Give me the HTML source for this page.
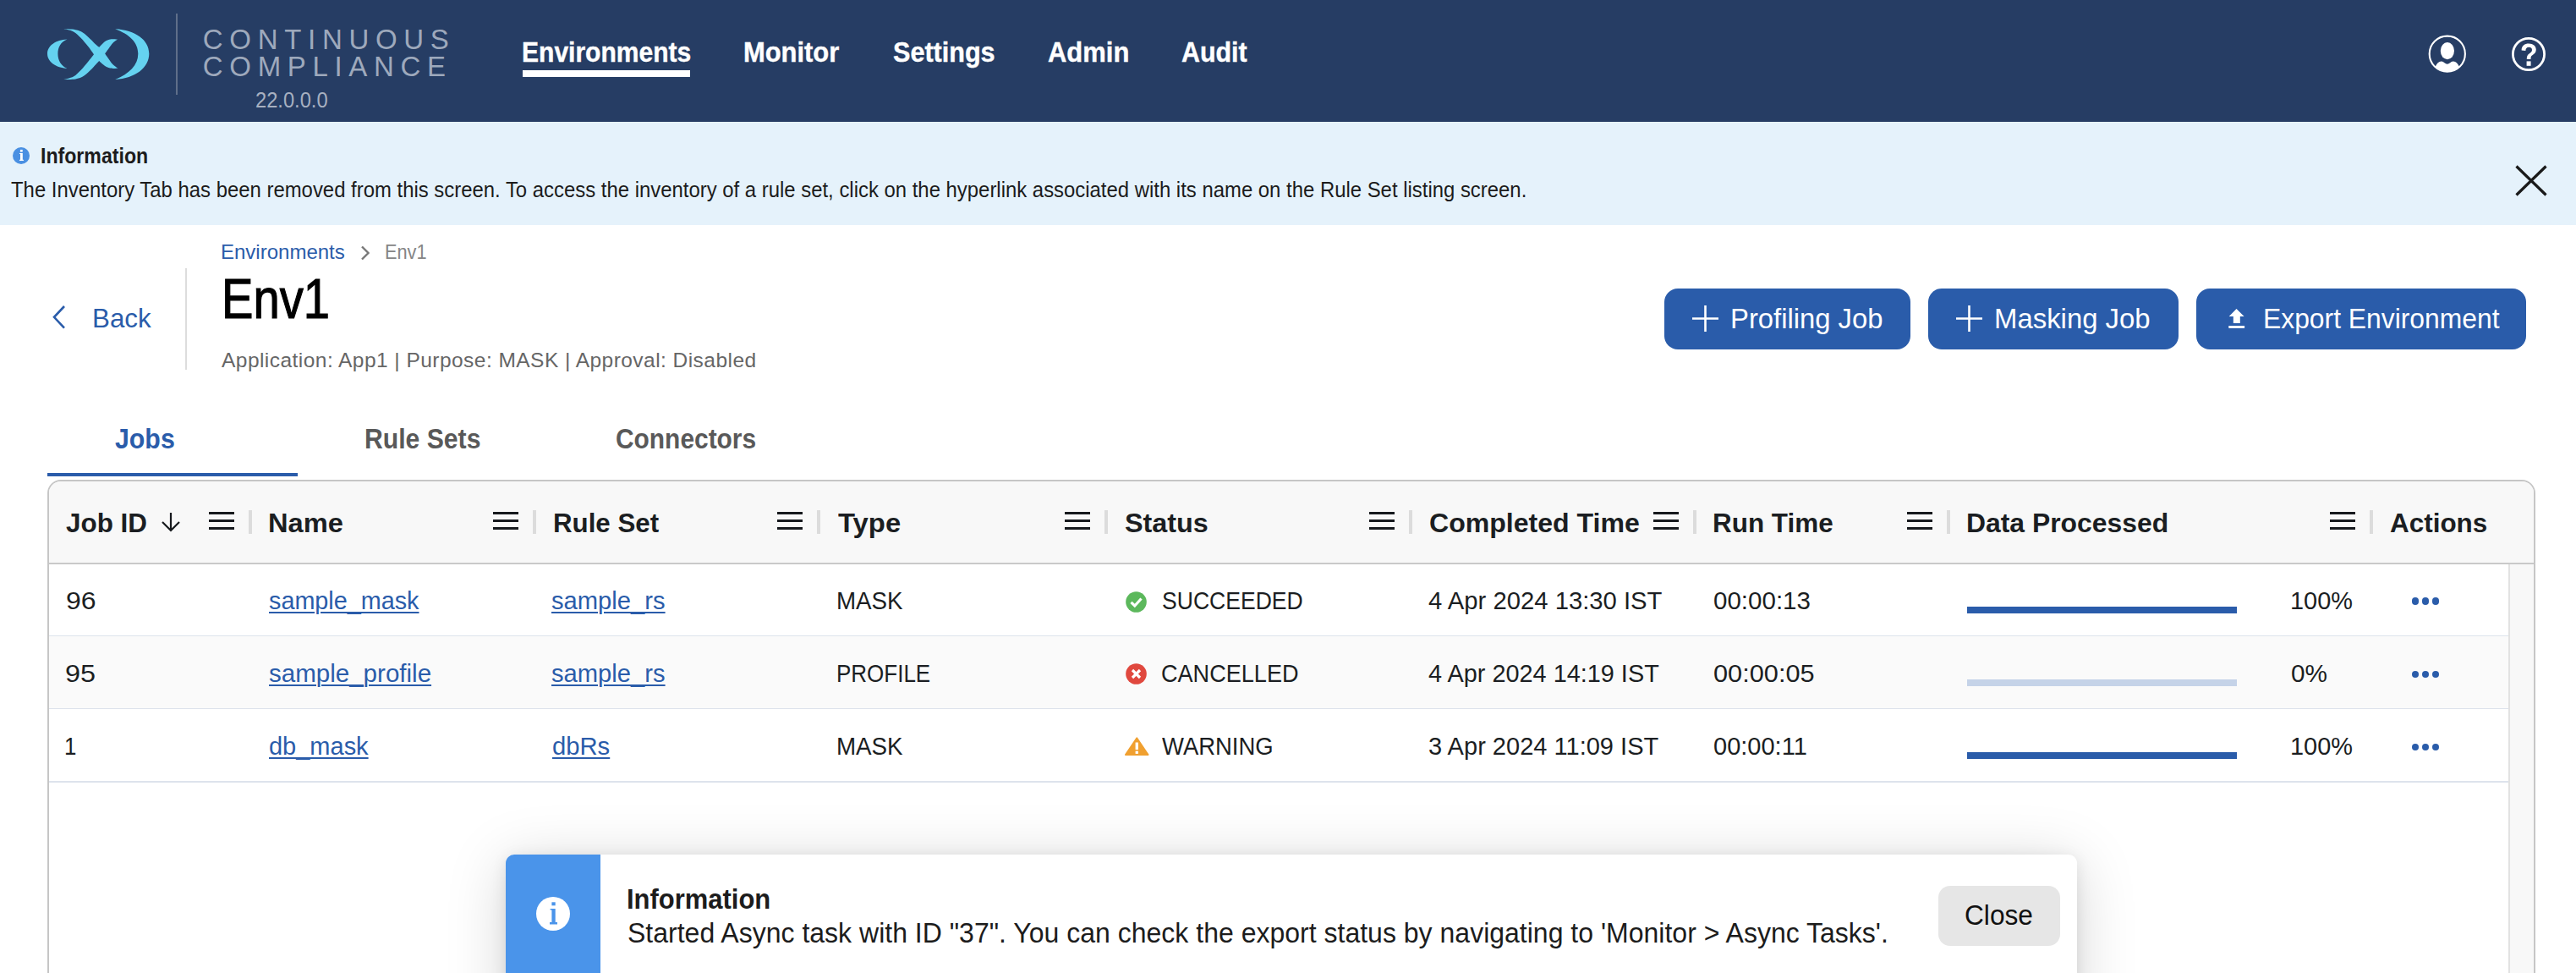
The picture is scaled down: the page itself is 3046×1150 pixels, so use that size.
<!DOCTYPE html>
<html><head><meta charset="utf-8"><style>
html,body{margin:0;padding:0;width:3046px;height:1150px;overflow:hidden;background:#fff;position:relative}
.t{position:absolute;white-space:nowrap;line-height:1;font-family:"Liberation Sans",sans-serif;transform-origin:0 0}
.r{position:absolute}
u{text-decoration-thickness:2px;text-underline-offset:2.5px}
</style></head><body>
<div class="r" style="left:0;top:0;width:3046px;height:144px;background:#263d64"></div>
<svg class="r" style="left:56px;top:33px" width="121" height="62" viewBox="0 0 121 62">
<g fill="#65d2f0">
<path d="M23.5 13.5 C10 14 0 21 0 30.5 C0 40 10 47 23.5 48 C16 45 12.4 38 12.4 30.5 C12.4 23 16 16 23.5 13.5 Z"/>
<path d="M19 1.1 C19.00 1.10 29.48 1.48 33.3 2.2 C37.12 2.92 39.02 3.62 41.9 5.4 C44.78 7.18 48.00 10.50 50.6 12.9 C53.20 15.30 55.72 18.13 57.5 19.8 C59.28 21.47 61.30 22.90 61.3 22.9 C61.30 22.90 65.53 18.12 67.5 16.6 C69.47 15.08 71.35 14.37 73.1 13.8 C74.85 13.23 76.35 13.25 78 13.2 C79.65 13.15 83.00 13.50 83 13.5 C83.00 13.50 78.95 16.32 77.3 18 C75.65 19.68 74.62 21.52 73.1 23.6 C71.58 25.68 68.20 30.50 68.2 30.5 C68.20 30.50 71.58 35.32 73.1 37.4 C74.62 39.48 75.58 41.28 77.3 43 C79.02 44.72 83.40 47.70 83.4 47.7 C83.40 47.70 79.72 47.97 78 47.9 C76.28 47.83 74.85 47.87 73.1 47.3 C71.35 46.73 69.47 45.88 67.5 44.5 C65.53 43.12 61.30 39.00 61.3 39 C61.30 39.00 59.28 41.12 57.5 43 C55.72 44.88 53.20 47.87 50.6 50.3 C48.00 52.73 44.78 55.92 41.9 57.6 C39.02 59.28 37.12 59.83 33.3 60.4 C29.48 60.97 19.00 61.00 19 61 C19.00 61.00 27.48 59.23 30.9 57.4 C34.32 55.57 36.63 52.90 39.5 50 C42.37 47.10 45.52 43.13 48.1 40 C50.68 36.87 55.00 31.20 55 31.2 C55.00 31.20 50.68 25.03 48.1 21.8 C45.52 18.57 42.37 14.70 39.5 11.8 C36.63 8.90 34.32 6.18 30.9 4.4 C27.48 2.62 19.00 1.10 19 1.1 Z"/>
<path d="M80.2 1.2 C104 2.5 120.3 14 120.3 30.5 C120.3 47 104 59.5 80.2 61 C97 54 107.3 44 107.3 30.5 C107.3 17 97 7.5 80.2 1.2 Z"/>
</g></svg>
<div class="r" style="left:208px;top:16px;width:2px;height:96px;background:#5f6f8a"></div>
<div id="cc1" class="t" style="left:239.80px;top:30.17px;font-size:33px;color:#9ea9bc;font-weight:400;letter-spacing:7.693px;">CONTINUOUS</div>
<div id="cc2" class="t" style="left:239.80px;top:62.27px;font-size:33px;color:#9ea9bc;font-weight:400;letter-spacing:7.667px;">COMPLIANCE</div>
<div id="ver" class="t" style="left:301.79px;top:104.99px;font-size:26px;color:#a7b0c0;font-weight:400;transform:scaleX(0.9112);">22.0.0.0</div>
<div id="nav1" class="t" style="left:616.97px;top:44.87px;font-size:33px;color:#ffffff;font-weight:700;transform:scaleX(0.9101);-webkit-text-stroke:0.4px #fff;">Environments</div>
<div id="nav2" class="t" style="left:878.94px;top:44.87px;font-size:33px;color:#ffffff;font-weight:700;transform:scaleX(0.9362);-webkit-text-stroke:0.4px #fff;">Monitor</div>
<div id="nav3" class="t" style="left:1056.11px;top:44.87px;font-size:33px;color:#ffffff;font-weight:700;transform:scaleX(0.9264);-webkit-text-stroke:0.4px #fff;">Settings</div>
<div id="nav4" class="t" style="left:1239.08px;top:44.87px;font-size:33px;color:#ffffff;font-weight:700;transform:scaleX(0.9380);-webkit-text-stroke:0.4px #fff;">Admin</div>
<div id="nav5" class="t" style="left:1396.66px;top:44.87px;font-size:33px;color:#ffffff;font-weight:700;transform:scaleX(0.9205);-webkit-text-stroke:0.4px #fff;">Audit</div>
<div class="r" style="left:618px;top:83px;width:198px;height:8px;background:#fff"></div>
<svg class="r" style="left:2870px;top:40px" width="48" height="48" viewBox="0 0 48 48">
<circle cx="23.8" cy="23.7" r="21.1" fill="none" stroke="#fff" stroke-width="2.1"/>
<ellipse cx="23.9" cy="20.1" rx="8.1" ry="10.1" fill="#fff"/>
<path d="M9.6 38.8 C11.5 35 13.5 32.6 16.8 32.4 C19.5 32.3 21.5 35.6 23.8 35.8 C26.1 35.6 28.1 32.3 30.8 32.4 C34.1 32.6 36.1 35 38 38.8 C34.2 42.6 29.3 44.8 23.8 44.8 C18.3 44.8 13.4 42.6 9.6 38.8 Z" fill="#fff"/>
</svg>
<svg class="r" style="left:2968px;top:42px" width="44" height="44" viewBox="0 0 44 44">
<circle cx="22" cy="22" r="18.6" fill="none" stroke="#fff" stroke-width="2.8"/>
<path d="M13.6 17.4 C13.6 12.2 17.3 9.6 22.2 9.6 C27.3 9.6 30.8 12.6 30.8 16.8 C30.8 20.2 28.6 21.8 26.4 23.3 C24.8 24.4 24.5 25.3 24.5 28.1 L19.8 28.1 C19.8 24.6 20.4 23 22.9 21.2 C25 19.7 26 18.8 26 17 C26 15 24.5 13.8 22.3 13.8 C19.7 13.8 18.4 15.5 18.4 17.9 Z" fill="#fff"/>
<rect x="19.6" y="30.4" width="5" height="5.4" fill="#fff"/>
</svg>
<div class="r" style="left:0;top:144px;width:3046px;height:121.5px;background:#e5f2fb"></div>
<svg class="r" style="left:15px;top:174px" width="20" height="20" viewBox="0 0 20 20">
<circle cx="10" cy="10" r="10" fill="#4a90e2"/>
<rect x="8.9" y="2.9" width="2.8" height="2.7" fill="#fff"/>
<path d="M8 7.1 L11.8 7.1 L11.8 14.8 L12.9 14.8 L12.9 16 L8 16 L8 14.8 L9 14.8 L9 8 L8 8 Z" fill="#fff"/>
</svg>
<div id="b_title" class="t" style="left:47.91px;top:171.19px;font-size:26px;color:#1c1c1c;font-weight:700;transform:scaleX(0.8893);">Information</div>
<div id="b_body" class="t" style="left:13.40px;top:211.29px;font-size:26px;color:#1c1c1c;font-weight:400;transform:scaleX(0.9191);">The Inventory Tab has been removed from this screen. To access the inventory of a rule set, click on the hyperlink associated with its name on the Rule Set listing screen.</div>
<svg class="r" style="left:2974px;top:195px" width="38" height="37" viewBox="0 0 38 37">
<path d="M1.5 1.5 L36.5 35.5 M36.5 1.5 L1.5 35.5" stroke="#1a1a1a" stroke-width="3.2"/>
</svg>
<svg class="r" style="left:60px;top:360px" width="20" height="30" viewBox="0 0 20 30">
<path d="M16 2 L4 14.8 L16 27.6" fill="none" stroke="#2a5caa" stroke-width="2.6"/>
</svg>
<div id="back" class="t" style="left:108.74px;top:360.21px;font-size:32px;color:#2a5caa;font-weight:400;transform:scaleX(0.9783);">Back</div>
<div class="r" style="left:219px;top:317px;width:2px;height:120px;background:#dddddd"></div>
<div id="bc1" class="t" style="left:260.99px;top:285.88px;font-size:24px;color:#2a5caa;font-weight:400;transform:scaleX(1.0002);">Environments</div>
<svg class="r" style="left:425px;top:289px" width="14" height="20" viewBox="0 0 14 20">
<path d="M3 2.5 L10.5 10 L3 17.5" fill="none" stroke="#777" stroke-width="2.4"/>
</svg>
<div id="bc2" class="t" style="left:454.67px;top:285.88px;font-size:24px;color:#858585;font-weight:400;transform:scaleX(0.9054);">Env1</div>
<div id="title" class="t" style="left:262.32px;top:318.58px;font-size:67px;color:#000000;font-weight:400;transform:scaleX(0.8379);-webkit-text-stroke:1.2px #000;">Env1</div>
<div id="sub" class="t" style="left:262.00px;top:413.96px;font-size:24.5px;color:#666666;font-weight:400;letter-spacing:0.457px;">Application: App1 | Purpose: MASK | Approval: Disabled</div>
<div class="r" style="left:1968px;top:341px;width:290.5px;height:71.5px;background:#2a5caa;border-radius:16px"></div>
<div class="r" style="left:2280px;top:341px;width:295.7px;height:71.5px;background:#2a5caa;border-radius:16px"></div>
<div class="r" style="left:2597px;top:341px;width:389.7px;height:71.5px;background:#2a5caa;border-radius:16px"></div>
<svg class="r" style="left:2001px;top:361px" width="31" height="31" viewBox="0 0 31 31"><path d="M15.5 0 V31 M0 15.5 H31" stroke="#fff" stroke-width="2.6"/></svg>
<svg class="r" style="left:2313px;top:361px" width="31" height="31" viewBox="0 0 31 31"><path d="M15.5 0 V31 M0 15.5 H31" stroke="#fff" stroke-width="2.6"/></svg>
<div id="btn1" class="t" style="left:2046.44px;top:359.67px;font-size:33px;color:#fff;font-weight:400;transform:scaleX(0.9940);">Profiling Job</div>
<div id="btn2" class="t" style="left:2358.21px;top:359.67px;font-size:33px;color:#fff;font-weight:400;transform:scaleX(0.9967);">Masking Job</div>
<svg class="r" style="left:2630px;top:360px" width="30" height="32" viewBox="0 0 30 32">
<path d="M14.5 4.9 L23.6 14.1 L18.8 14.1 L18.8 22.1 L10.8 22.1 L10.8 14.1 L5.7 14.1 Z" fill="#fff"/><rect x="5.3" y="25" width="18.8" height="2.9" fill="#fff"/>
</svg>
<div id="btn3" class="t" style="left:2675.71px;top:359.67px;font-size:33px;color:#fff;font-weight:400;transform:scaleX(0.9644);">Export Environment</div>
<div id="tab1" class="t" style="left:135.89px;top:502.37px;font-size:33px;color:#2a5caa;font-weight:700;transform:scaleX(0.9184);">Jobs</div>
<div id="tab2" class="t" style="left:430.55px;top:502.37px;font-size:33px;color:#595959;font-weight:700;transform:scaleX(0.9139);">Rule Sets</div>
<div id="tab3" class="t" style="left:728.09px;top:502.37px;font-size:33px;color:#595959;font-weight:700;transform:scaleX(0.9061);">Connectors</div>
<div class="r" style="left:56px;top:559px;width:296px;height:4px;background:#2a5caa"></div>
<div class="r" style="left:56px;top:567px;width:2942px;height:600px;border:2px solid #c6c6c6;border-radius:16px 16px 0 0;box-sizing:border-box;background:#fff"></div>
<div class="r" style="left:58px;top:569px;width:2938px;height:96px;background:#f8f8f8;border-radius:14px 14px 0 0"></div>
<div class="r" style="left:58px;top:665px;width:2938px;height:2px;background:#c9c9c9"></div>
<div id="h0" class="t" style="left:78.00px;top:601.91px;font-size:32px;color:#1b1e22;font-weight:700;transform:scaleX(0.9813);">Job ID</div>
<svg class="r" style="left:247px;top:605px" width="30" height="22" viewBox="0 0 30 22"><rect x="0" y="0" width="30" height="3" fill="#16191d"/><rect x="0" y="9" width="30" height="3" fill="#16191d"/><rect x="0" y="18" width="30" height="3" fill="#16191d"/></svg>
<div class="r" style="left:294px;top:603px;width:4px;height:28px;background:#dcdcdc"></div>
<div id="h1" class="t" style="left:316.94px;top:601.91px;font-size:32px;color:#1b1e22;font-weight:700;transform:scaleX(1.0193);">Name</div>
<svg class="r" style="left:583px;top:605px" width="30" height="22" viewBox="0 0 30 22"><rect x="0" y="0" width="30" height="3" fill="#16191d"/><rect x="0" y="9" width="30" height="3" fill="#16191d"/><rect x="0" y="18" width="30" height="3" fill="#16191d"/></svg>
<div class="r" style="left:630px;top:603px;width:4px;height:28px;background:#dcdcdc"></div>
<div id="h2" class="t" style="left:653.85px;top:601.91px;font-size:32px;color:#1b1e22;font-weight:700;transform:scaleX(0.9771);">Rule Set</div>
<svg class="r" style="left:919px;top:605px" width="30" height="22" viewBox="0 0 30 22"><rect x="0" y="0" width="30" height="3" fill="#16191d"/><rect x="0" y="9" width="30" height="3" fill="#16191d"/><rect x="0" y="18" width="30" height="3" fill="#16191d"/></svg>
<div class="r" style="left:966px;top:603px;width:4px;height:28px;background:#dcdcdc"></div>
<div id="h3" class="t" style="left:991.00px;top:601.91px;font-size:32px;color:#1b1e22;font-weight:700;transform:scaleX(1.0256);">Type</div>
<svg class="r" style="left:1259px;top:605px" width="30" height="22" viewBox="0 0 30 22"><rect x="0" y="0" width="30" height="3" fill="#16191d"/><rect x="0" y="9" width="30" height="3" fill="#16191d"/><rect x="0" y="18" width="30" height="3" fill="#16191d"/></svg>
<div class="r" style="left:1306px;top:603px;width:4px;height:28px;background:#dcdcdc"></div>
<div id="h4" class="t" style="left:1329.99px;top:601.91px;font-size:32px;color:#1b1e22;font-weight:700;transform:scaleX(1.0104);">Status</div>
<svg class="r" style="left:1619px;top:605px" width="30" height="22" viewBox="0 0 30 22"><rect x="0" y="0" width="30" height="3" fill="#16191d"/><rect x="0" y="9" width="30" height="3" fill="#16191d"/><rect x="0" y="18" width="30" height="3" fill="#16191d"/></svg>
<div class="r" style="left:1666px;top:603px;width:4px;height:28px;background:#dcdcdc"></div>
<div id="h5" class="t" style="left:1690.00px;top:601.91px;font-size:32px;color:#1b1e22;font-weight:700;transform:scaleX(1.0020);">Completed Time</div>
<svg class="r" style="left:1955px;top:605px" width="30" height="22" viewBox="0 0 30 22"><rect x="0" y="0" width="30" height="3" fill="#16191d"/><rect x="0" y="9" width="30" height="3" fill="#16191d"/><rect x="0" y="18" width="30" height="3" fill="#16191d"/></svg>
<div class="r" style="left:2002px;top:603px;width:4px;height:28px;background:#dcdcdc"></div>
<div id="h6" class="t" style="left:2025.04px;top:601.91px;font-size:32px;color:#1b1e22;font-weight:700;transform:scaleX(0.9824);">Run Time</div>
<svg class="r" style="left:2255px;top:605px" width="30" height="22" viewBox="0 0 30 22"><rect x="0" y="0" width="30" height="3" fill="#16191d"/><rect x="0" y="9" width="30" height="3" fill="#16191d"/><rect x="0" y="18" width="30" height="3" fill="#16191d"/></svg>
<div class="r" style="left:2302px;top:603px;width:4px;height:28px;background:#dcdcdc"></div>
<div id="h7" class="t" style="left:2325.01px;top:601.91px;font-size:32px;color:#1b1e22;font-weight:700;transform:scaleX(0.9958);">Data Processed</div>
<svg class="r" style="left:2755px;top:605px" width="30" height="22" viewBox="0 0 30 22"><rect x="0" y="0" width="30" height="3" fill="#16191d"/><rect x="0" y="9" width="30" height="3" fill="#16191d"/><rect x="0" y="18" width="30" height="3" fill="#16191d"/></svg>
<div class="r" style="left:2802px;top:603px;width:4px;height:28px;background:#dcdcdc"></div>
<div id="h8" class="t" style="left:2826.02px;top:601.91px;font-size:32px;color:#1b1e22;font-weight:700;transform:scaleX(0.9826);">Actions</div>
<svg class="r" style="left:190px;top:605px" width="24" height="24" viewBox="0 0 24 24">
<path d="M12 1 V22 M2 12 L12 22 L22 12" fill="none" stroke="#16191d" stroke-width="2.2"/></svg>
<div class="r" style="left:58px;top:667px;width:2908px;height:85px;background:#ffffff"></div>
<div class="r" style="left:58px;top:751px;width:2908px;height:2px;background:#dde3ec"></div>
<div id="r0c0" class="t" style="left:77.98px;top:696.45px;font-size:29px;color:#1b1e22;font-weight:400;transform:scaleX(1.1038);">96</div>
<div id="r0c1" class="t" style="left:317.81px;top:696.45px;font-size:29px;color:#2a5caa;font-weight:400;transform:scaleX(0.9921);"><u>sample_mask</u></div>
<div id="r0c2" class="t" style="left:652.02px;top:696.45px;font-size:29px;color:#2a5caa;font-weight:400;transform:scaleX(1.0061);"><u>sample_rs</u></div>
<div id="r0c3" class="t" style="left:989.08px;top:696.45px;font-size:29px;color:#1b1e22;font-weight:400;transform:scaleX(0.9562);">MASK</div>
<svg class="r" style="left:1331px;top:699.0px" width="25" height="25" viewBox="0 0 25 25"><circle cx="12.5" cy="12.5" r="12.3" fill="#5cb85c"/><path d="M6.5 12.8 L10.8 17 L18.5 8.5" fill="none" stroke="#fff" stroke-width="3.2"/></svg>
<div id="r0c4" class="t" style="left:1373.89px;top:696.45px;font-size:29px;color:#1b1e22;font-weight:400;transform:scaleX(0.9155);">SUCCEEDED</div>
<div id="r0c5" class="t" style="left:1689.40px;top:696.45px;font-size:29px;color:#1b1e22;font-weight:400;transform:scaleX(1.0087);">4 Apr 2024 13:30 IST</div>
<div id="r0c6" class="t" style="left:2025.98px;top:696.45px;font-size:29px;color:#1b1e22;font-weight:400;transform:scaleX(1.0180);">00:00:13</div>
<div class="r" style="left:2325.6px;top:717.2px;width:319.5px;height:7.8px;background:#2a5caa"></div>
<div id="r0c7" class="t" style="left:2707.97px;top:696.45px;font-size:29px;color:#1b1e22;font-weight:400;transform:scaleX(0.9974);">100%</div>
<div class="r" style="left:2851.6px;top:706.45px;width:8.5px;height:8.5px;border-radius:50%;background:#2a5caa"></div>
<div class="r" style="left:2863.6px;top:706.45px;width:8.5px;height:8.5px;border-radius:50%;background:#2a5caa"></div>
<div class="r" style="left:2875.6px;top:706.45px;width:8.5px;height:8.5px;border-radius:50%;background:#2a5caa"></div>
<div class="r" style="left:58px;top:752px;width:2908px;height:86px;background:#fafafa"></div>
<div class="r" style="left:58px;top:837px;width:2908px;height:2px;background:#dde3ec"></div>
<div id="r1c0" class="t" style="left:77.24px;top:782.45px;font-size:29px;color:#1b1e22;font-weight:400;transform:scaleX(1.1179);">95</div>
<div id="r1c1" class="t" style="left:317.79px;top:782.45px;font-size:29px;color:#2a5caa;font-weight:400;transform:scaleX(1.0183);"><u>sample_profile</u></div>
<div id="r1c2" class="t" style="left:652.02px;top:782.45px;font-size:29px;color:#2a5caa;font-weight:400;transform:scaleX(1.0061);"><u>sample_rs</u></div>
<div id="r1c3" class="t" style="left:989.22px;top:782.45px;font-size:29px;color:#1b1e22;font-weight:400;transform:scaleX(0.8960);">PROFILE</div>
<svg class="r" style="left:1331px;top:784.0px" width="25" height="25" viewBox="0 0 25 25"><circle cx="12.5" cy="12.5" r="12.3" fill="#e0483e"/><path d="M8 8 L17 17 M17 8 L8 17" fill="none" stroke="#fff" stroke-width="3.2"/></svg>
<div id="r1c4" class="t" style="left:1373.07px;top:782.45px;font-size:29px;color:#1b1e22;font-weight:400;transform:scaleX(0.9336);">CANCELLED</div>
<div id="r1c5" class="t" style="left:1689.40px;top:782.45px;font-size:29px;color:#1b1e22;font-weight:400;transform:scaleX(0.9952);">4 Apr 2024 14:19 IST</div>
<div id="r1c6" class="t" style="left:2025.97px;top:782.45px;font-size:29px;color:#1b1e22;font-weight:400;transform:scaleX(1.0595);">00:00:05</div>
<div class="r" style="left:2325.6px;top:803px;width:319.5px;height:7.8px;background:#c5d3e8"></div>
<div id="r1c7" class="t" style="left:2708.97px;top:782.45px;font-size:29px;color:#1b1e22;font-weight:400;transform:scaleX(1.0250);">0%</div>
<div class="r" style="left:2851.6px;top:792.55px;width:8.5px;height:8.5px;border-radius:50%;background:#2a5caa"></div>
<div class="r" style="left:2863.6px;top:792.55px;width:8.5px;height:8.5px;border-radius:50%;background:#2a5caa"></div>
<div class="r" style="left:2875.6px;top:792.55px;width:8.5px;height:8.5px;border-radius:50%;background:#2a5caa"></div>
<div class="r" style="left:58px;top:838px;width:2908px;height:86px;background:#ffffff"></div>
<div class="r" style="left:58px;top:923px;width:2908px;height:2px;background:#dde3ec"></div>
<div id="r2c0" class="t" style="left:76.19px;top:867.95px;font-size:29px;color:#1b1e22;font-weight:400;transform:scaleX(0.8913);">1</div>
<div id="r2c1" class="t" style="left:317.81px;top:867.95px;font-size:29px;color:#2a5caa;font-weight:400;transform:scaleX(0.9995);"><u>db_mask</u></div>
<div id="r2c2" class="t" style="left:653.00px;top:867.95px;font-size:29px;color:#2a5caa;font-weight:400;transform:scaleX(1.0079);"><u>dbRs</u></div>
<div id="r2c3" class="t" style="left:989.08px;top:867.95px;font-size:29px;color:#1b1e22;font-weight:400;transform:scaleX(0.9562);">MASK</div>
<svg class="r" style="left:1329.5px;top:870.5px" width="29" height="23" viewBox="0 0 29 23"><path d="M14.25 1.2 L27.6 21 L0.9 21 Z" fill="#f0a030" stroke="#f0a030" stroke-linejoin="round" stroke-width="1.8"/><rect x="12.6" y="6.5" width="3.3" height="8.5" fill="#fff"/><rect x="12.6" y="16.6" width="3.3" height="3.3" fill="#fff"/></svg>
<div id="r2c4" class="t" style="left:1374.00px;top:867.95px;font-size:29px;color:#1b1e22;font-weight:400;transform:scaleX(0.9468);">WARNING</div>
<div id="r2c5" class="t" style="left:1689.00px;top:867.95px;font-size:29px;color:#1b1e22;font-weight:400;transform:scaleX(1.0012);">3 Apr 2024 11:09 IST</div>
<div id="r2c6" class="t" style="left:2026.00px;top:867.95px;font-size:29px;color:#1b1e22;font-weight:400;transform:scaleX(1.0003);">00:00:11</div>
<div class="r" style="left:2325.6px;top:889px;width:319.5px;height:7.8px;background:#2a5caa"></div>
<div id="r2c7" class="t" style="left:2707.97px;top:867.95px;font-size:29px;color:#1b1e22;font-weight:400;transform:scaleX(0.9974);">100%</div>
<div class="r" style="left:2851.6px;top:878.75px;width:8.5px;height:8.5px;border-radius:50%;background:#2a5caa"></div>
<div class="r" style="left:2863.6px;top:878.75px;width:8.5px;height:8.5px;border-radius:50%;background:#2a5caa"></div>
<div class="r" style="left:2875.6px;top:878.75px;width:8.5px;height:8.5px;border-radius:50%;background:#2a5caa"></div>
<div class="r" style="left:2966px;top:667px;width:30px;height:500px;background:#f8f8f8"></div>
<div class="r" style="left:2966px;top:667px;width:2px;height:500px;background:#e2e2e2"></div>
<div class="r" style="left:598px;top:1010px;width:1858px;height:200px;background:#fff;border-radius:10px 10px 0 0;box-shadow:0 10px 70px rgba(0,0,0,0.17),0 3px 18px rgba(0,0,0,0.09)"></div>
<div class="r" style="left:598px;top:1010px;width:112px;height:200px;background:#4a94ea;border-radius:10px 0 0 0"></div>
<svg class="r" style="left:634px;top:1060px" width="40" height="40" viewBox="0 0 40 40">
<circle cx="20" cy="20" r="20" fill="#fff"/>
<rect x="18.4" y="6.3" width="4.3" height="4" fill="#4a94ea"/>
<path d="M16.6 14 L22.7 14 L22.7 30 L25 30 L25 32.5 L16 32.5 L16 30 L18.4 30 L18.4 15.6 L16.6 15.6 Z" fill="#4a94ea"/>
</svg>
<div id="t_title" class="t" style="left:741.00px;top:1044.52px;font-size:34px;color:#1c1c1c;font-weight:700;transform:scaleX(0.9107);">Information</div>
<div id="t_body" class="t" style="left:741.86px;top:1085.87px;font-size:33px;color:#1c1c1c;font-weight:400;transform:scaleX(0.9701);">Started Async task with ID "37". You can check the export status by navigating to 'Monitor &gt; Async Tasks'.</div>
<div class="r" style="left:2292px;top:1047px;width:144px;height:71px;background:#e6e6e6;border-radius:14px"></div>
<div id="close" class="t" style="left:2323.08px;top:1065.07px;font-size:33px;color:#111111;font-weight:400;transform:scaleX(0.9594);">Close</div>
</body></html>
